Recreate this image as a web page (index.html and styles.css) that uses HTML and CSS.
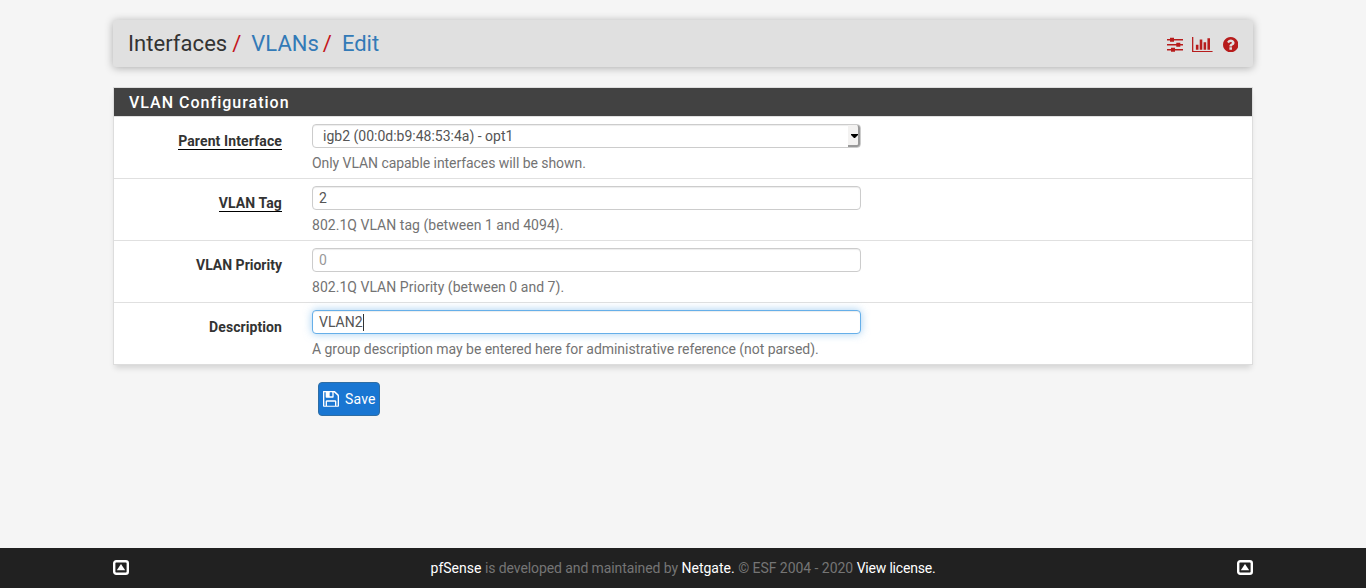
FILE: index.html
```html
<!DOCTYPE html>
<html lang="en">
<head>
<meta charset="utf-8">
<title>Interfaces: VLANs: Edit</title>
<link rel="stylesheet" href="styles.css">
</head>
<body>
<div class="container">
  <header class="header">
    <ol class="breadcrumb">
      <li>Interfaces</li>
      <li><a>VLANs</a></li>
      <li><a>Edit</a></li>
    </ol>
    <nav class="context-links">
      <svg class="icon-sliders" viewBox="0 0 16 15" width="16" height="15"><path d="M0 2h16v1.500H0zM0 7h16v1.500H0zM0 12h16v1.500H0z"/><path d="M3 .8h4v3.900H3zM9.300 5.800h4v3.900h-4zM4 10.800h4v3.900H4z"/></svg>
      <svg class="icon-chart" viewBox="0 128 2048 1536" width="20.6" height="15.4"><path d="M640 896v512h-256v-512h256zM1024 384v1024h-256v-1024h256zM2048 1536v128h-2048v-1536h128v1408h1920zM1408 640v768h-256v-768h256zM1792 256v1152h-256v-1152h256z"/></svg>
      <svg class="icon-help" viewBox="128 128 1536 1536" width="15.4" height="15.4"><path d="M1024 1376v-192q0-14-9-23t-23-9h-192q-14 0-23 9t-9 23v192q0 14 9 23t23 9h192q14 0 23-9t9-23zm256-672q0-88-55.500-163t-138.500-116-170-41q-243 0-371 213-15 24 8 42l132 100q7 6 19 6 16 0 25-12 53-68 86-92 34-24 86-24 48 0 85.500 26t37.500 59q0 38-20 61t-68 45q-63 28-115.500 86.500t-52.500 125.500v36q0 14 9 23t23 9h192q14 0 23-9t9-23q0-19 21.500-49.500t54.500-49.500q32-18 49-28.500t46-35 44.500-48 28-60.500 12.500-81zm384 192q0 209-103 385.500t-279.500 279.500-385.500 103-385.500-103-279.500-279.500-103-385.500 103-385.500 279.500-279.500 385.500-103 385.500 103 279.500 279.500 103 385.500z"/></svg>
    </nav>
  </header>

  <main class="panel">
    <h2 class="panel-heading">VLAN Configuration</h2>
    <div class="form-group">
      <div class="control-label"><span class="required">Parent Interface</span></div>
      <div class="control">
        <div class="form-control select"><span>igb2 (00:0d:b9:48:53:4a) - opt1</span><span class="select-button"><svg viewBox="0 0 7 4" width="7" height="4"><path d="M0 0h7v1L4 4H3L0 1z"/></svg></span></div>
        <p class="help-block tight">Only VLAN capable interfaces will be shown.</p>
      </div>
    </div>
    <div class="form-group">
      <div class="control-label"><span class="required">VLAN Tag</span></div>
      <div class="control">
        <div class="form-control">2</div>
        <p class="help-block loose">802.1Q VLAN tag (between 1 and 4094).</p>
      </div>
    </div>
    <div class="form-group">
      <div class="control-label"><span>VLAN Priority</span></div>
      <div class="control">
        <div class="form-control placeholder">0</div>
        <p class="help-block loose">802.1Q VLAN Priority (between 0 and 7).</p>
      </div>
    </div>
    <div class="form-group">
      <div class="control-label"><span class="description">Description</span></div>
      <div class="control">
        <div class="form-control focused">VLAN2<span class="caret"></span></div>
        <p class="help-block tight-long">A group description may be entered here for administrative reference (not parsed).</p>
      </div>
    </div>
  </main>

  <button class="btn-save" type="button"><svg viewBox="128 128 1536 1536" width="16" height="16"><path d="M512 1536h768v-384h-768v384zm896 0h128v-896q0-14-10-38.500t-20-34.500l-281-281q-10-10-34-20t-39-10v416q0 40-28 68t-68 28h-576q-40 0-68-28t-28-68v-416h-128v1280h128v-416q0-40 28-68t68-28h832q40 0 68 28t28 68v416zm-384-928v-320q0-13-9.500-22.500t-22.500-9.500h-192q-13 0-22.500 9.500t-9.500 22.500v320q0 13 9.500 22.500t22.500 9.500h192q13 0 22.500-9.500t9.500-22.500zm640 32v896q0 40-28 68t-68 28h-1344q-40 0-68-28t-28-68v-1344q0-40 28-68t68-28h928q40 0 88 20t76 48l280 280q28 28 48 76t20 88z"/></svg><span>Save</span></button>
</div>

<footer class="footer">
  <div class="footer-inner">
    <svg viewBox="0 0 16 15" width="16" height="15"><rect x="1.200" y="1.200" width="13.600" height="12.600" rx="2" fill="none" stroke="#fff" stroke-width="2.400"/><path d="M3.800 10.200 8 4l4.200 6.200z"/></svg>
    <p class="footer-text"><a>pfSense</a> <span class="credit">is developed and maintained by</span> <a>Netgate.</a> <span class="copyright">© ESF 2004 - 2020</span> <a class="license">View license.</a></p>
    <svg viewBox="0 0 16 15" width="16" height="15"><rect x="1.200" y="1.200" width="13.600" height="12.600" rx="2" fill="none" stroke="#fff" stroke-width="2.400"/><path d="M3.800 10.200 8 4l4.200 6.200z"/></svg>
  </div>
</footer>
</body>
</html>
```

FILE: styles.css
```css
* { box-sizing: border-box; }
body {
  margin: 0;
  height: 588px;
  display: flex;
  flex-direction: column;
  background: #f5f5f5;
  color: #333;
  font: 14px/20px Roboto, sans-serif;
  overflow: hidden;
}
.container { width: 1140px; margin: 0 auto; padding-top: 20px; flex: 1; }
.header {
  display: flex;
  justify-content: space-between;
  align-items: center;
  height: 47px;
  padding: 0 15px;
  background: #e0e0e0;
  border-radius: 3px;
  box-shadow: 0 1px 8px rgba(0, 0, 0, .3);
}
.breadcrumb {
  display: flex;
  margin: 0;
  padding: 0;
  list-style: none;
  font-size: 22px;
  line-height: 24px;
}
.breadcrumb li + li::before { content: "/"; color: #c4161c; padding: 0 10px 0 5px; }
.breadcrumb li:last-child::before { padding-left: 4px; padding-right: 10px; }
.breadcrumb li:first-child { letter-spacing: .05px; }
.breadcrumb a { color: #337ab7; }
.context-links { display: flex; align-items: center; gap: 9px; padding-top: 2px; }
.context-links svg { fill: #b71c1c; display: block; }
.icon-help { margin-left: 1px; }
.panel {
  margin-top: 20px;
  background: #fff;
  border: 1px solid #ddd;
  box-shadow: 0 5px 6px -2px rgba(0, 0, 0, .14);
}
.panel-heading {
  margin: 0;
  height: 28px;
  padding: 0 15px;
  background: #424242;
  color: #fff;
  font-size: 16px;
  font-weight: 500;
  line-height: 29px;
  letter-spacing: 1px;
}
.form-group { display: flex; height: 62px; border-top: 1px solid #e0e0e0; }
.control-label {
  width: 168px;
  padding-top: 14px;
  text-align: right;
  font-weight: 700;
}
.control-label span { display: inline-block; line-height: 20px; }
.control-label .required {
  height: 19px;
  border-bottom: 1px solid #000;
  letter-spacing: .12px;
}
.control-label .description { letter-spacing: .08px; }
.control { width: 549px; margin-left: 30px; padding-top: 7px; }
.form-control {
  display: flex;
  align-items: center;
  height: 24px;
  padding: 0 6px;
  background: #fff;
  border: 1px solid #ccc;
  border-radius: 4px;
  color: #555;
  box-shadow: inset 0 1px 1px rgba(0, 0, 0, .075);
}
.select { justify-content: space-between; padding: 0 0 0 10px; }
.select-button {
  display: flex;
  align-items: center;
  justify-content: flex-end;
  width: 12px;
  height: 22px;
  background: #f3f2f1;
  border-right: 2px solid #999;
  border-bottom: 2px solid #999;
  border-radius: 0 3px 3px 0;
}
.select-button svg { flex: none; margin-top: 2px; }
.placeholder { color: #999; }
.focused {
  border-color: #66afe9;
  box-shadow: inset 0 1px 1px rgba(0, 0, 0, .075), 0 0 8px rgba(102, 175, 233, .6);
}
.caret { width: 1px; height: 17px; background: #333; }
.help-block { margin: 5px 0 0; color: #737373; }
.tight { letter-spacing: -.06px; }
.tight-long { letter-spacing: -.04px; }
.loose { letter-spacing: .03px; }
.btn-save {
  display: flex;
  align-items: center;
  gap: 6px;
  width: 62px;
  height: 34px;
  margin: 17px 0 0 205px;
  padding: 0 4px;
  background: #1976d2;
  border: 1px solid #2e6da4;
  border-radius: 4px;
  color: #fff;
  font: inherit;
  letter-spacing: .15px;
}
.btn-save svg { fill: #fff; flex: none; }
.footer { height: 40px; background: #212121; color: #757575; }
.footer-inner {
  display: flex;
  align-items: center;
  justify-content: space-between;
  width: 1140px;
  height: 40px;
  margin: 0 auto;
}
.footer-inner svg { display: block; fill: #fff; margin-bottom: 1px; }
.footer-text { margin: 0; }
.footer-text a { color: #fff; }
.credit { letter-spacing: -.09px; }
.copyright { letter-spacing: -.04px; }
.footer-text .license { letter-spacing: -.2px; }
```
